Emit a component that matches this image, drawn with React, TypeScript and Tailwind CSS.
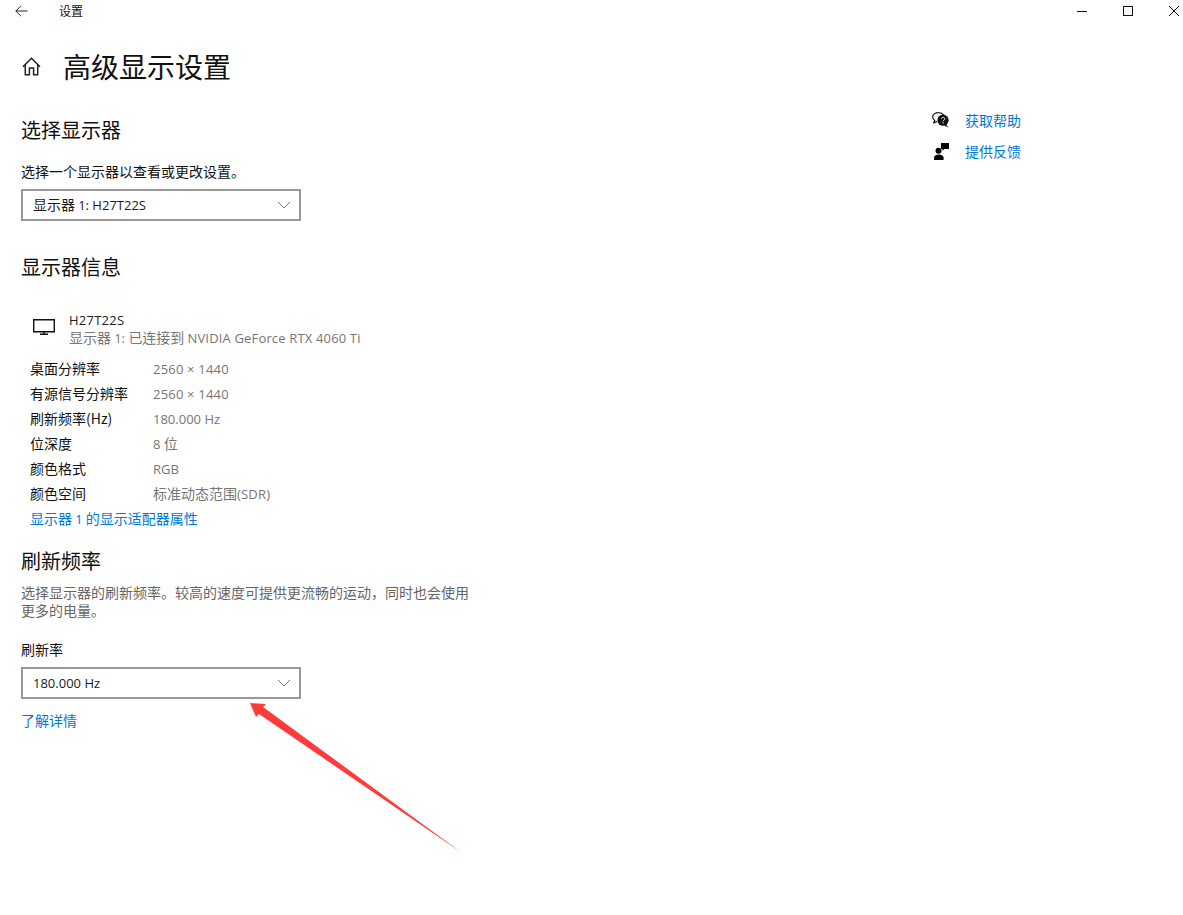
import React from "react";
import clsx from "clsx";

const font = "font-['Noto_Sans_CJK_SC','Open_Sans',sans-serif]";

// Latin runs sit a little smaller than the CJK text around them
function Lat({ children, className }: { children: React.ReactNode; className?: string }) {
    return <span className={clsx("font-['Open_Sans',sans-serif] text-[13px] leading-none", className)}>{children}</span>;
}

const infoRows: [string, React.ReactNode][] = [
    ["桌面分辨率", <Lat className="tracking-[0.2px]">2560 × 1440</Lat>],
    ["有源信号分辨率", <Lat className="tracking-[0.2px]">2560 × 1440</Lat>],
    ["刷新频率(Hz)", <Lat>180.000 Hz</Lat>],
    ["位深度", <><Lat>8 </Lat>位</>],
    ["颜色格式", <Lat>RGB</Lat>],
    ["颜色空间", <>标准动态范围<Lat className="tracking-[0.2px]">(SDR)</Lat></>],
];

function Chevron() {
    return (
        <svg width="14" height="8" viewBox="0 0 14 8" fill="none" stroke="#777" strokeWidth="1">
            <path d="M1 1l6 6 6-6" />
        </svg>
    );
}

function Select({ children }: { children: React.ReactNode }) {
    return (
        <div className="flex h-[32px] w-[280px] items-center justify-between border-2 border-[#999] pl-[10px] pr-[8px] text-[14px] leading-[20px] text-[#1a1a1a]">
            <span className="pb-[2px]">{children}</span>
            <Chevron />
        </div>
    );
}

function HelpIcon() {
    return (
        <svg width="18" height="16" viewBox="0 0 18 16">
            <path d="M6.5.7C3.2.7.7 2.6.7 5.1c0 1.4.8 2.7 2 3.5L1.8 10.8 5.2 9.6" fill="none" stroke="#111" strokeWidth="1.2" />
            <path d="M6.5.7c2.2 0 4.2.9 5.2 2.3" fill="none" stroke="#111" strokeWidth="1.2" />
            <circle cx="11" cy="8.2" r="5.6" fill="#111" />
            <path d="M13.8 12.4l2.9 3.1-4.4-1.8z" fill="#111" />
            <path d="M9.4 6.9c.1-1 .8-1.5 1.7-1.5s1.6.6 1.6 1.4c0 1.2-1.6 1.3-1.6 2.5" fill="none" stroke="#fff" strokeWidth="1" />
            <rect x="10.6" y="10.3" width="1.1" height="1.1" fill="#fff" />
        </svg>
    );
}

function FeedbackIcon() {
    return (
        <svg width="15" height="17" viewBox="0 0 15 17">
            <path d="M7 0h8v6h-4.5L8.5 7.8V6H7z" fill="#000" />
            <circle cx="4.5" cy="7.8" r="3" fill="#000" />
            <path d="M0 17v-2.2c0-2 1.9-3.3 4.8-3.3s4.8 1.3 4.8 3.3V17z" fill="#000" />
        </svg>
    );
}

export default function App() {
    return (
        <div className={`relative min-h-[915px] w-full overflow-hidden bg-white ${font}`}>
            {/* Title bar */}
            <div className="flex h-[22px] items-center justify-between">
                <div className="flex items-center">
                    <svg className="ml-[15px]" width="13" height="12" viewBox="0 0 13 12" fill="none" stroke="#222" strokeWidth="1">
                        <path d="M12.5 6H.8M6 .8L.8 6 6 11.2" />
                    </svg>
                    <span className="ml-[31px] text-[12px] leading-[16px] text-[#111]">设置</span>
                </div>
                <div className="flex items-center">
                    <svg width="10" height="10" viewBox="0 0 10 10" stroke="#111" strokeWidth="1">
                        <path d="M0 5.5h10" />
                    </svg>
                    <svg className="ml-[36px]" width="10" height="10" viewBox="0 0 10 10" fill="none" stroke="#111" strokeWidth="1">
                        <rect x=".5" y=".5" width="9" height="9" />
                    </svg>
                    <svg className="ml-[36px] mr-[4px]" width="10" height="10" viewBox="0 0 10 10" fill="none" stroke="#111" strokeWidth="1">
                        <path d="M0 0l10 10M10 0L0 10" />
                    </svg>
                </div>
            </div>

            <div className="flex">
                {/* Main column */}
                <div className="w-[932px] pl-[21px]">
                    <div className="mt-[22px] flex h-[44px] items-center">
                        <svg className="ml-[1px]" width="19" height="19" viewBox="0 0 19 19" fill="none" stroke="#222" strokeWidth="1.5">
                            <path d="M1 9.8L9.5 1.2 18 9.8M3.3 7.6V17.8H7.4V11H11.6V17.8H15.7V7.6" />
                        </svg>
                        <h1 className="ml-[22px] text-[28px] font-normal leading-[44px] text-[#111]">高级显示设置</h1>
                    </div>

                    <h2 className="mt-[28px] text-[20px] font-normal leading-[28px] text-[#111]">选择显示器</h2>
                    <p className="mt-[17px] text-[14px] leading-[20px] text-[#111]">选择一个显示器以查看或更改设置。</p>
                    <div className="mt-[8px]">
                        <Select>显示器 <Lat>1: H27T22S</Lat></Select>
                    </div>

                    <h2 className="mt-[32px] text-[20px] font-normal leading-[28px] text-[#111]">显示器信息</h2>

                    <div className="mt-[29px] flex pl-[12px]">
                        <svg className="mt-[9px]" width="22" height="16" viewBox="0 0 22 16" fill="none" stroke="#111" strokeWidth="1.4">
                            <path d="M.7.7h20.6v12H.7zM7 15.3h8M11 12.7v2.6" />
                        </svg>
                        <div className="ml-[14px]">
                            <div className="text-[14px] leading-[18px] text-[#222]"><Lat className="tracking-[0.25px]">H27T22S</Lat></div>
                            <div className="text-[14px] leading-[18px] text-[#767676]">显示器 <Lat>1: </Lat>已连接到 <Lat className="tracking-[0.16px]">NVIDIA GeForce RTX 4060 Ti</Lat></div>
                        </div>
                    </div>

                    <div className="mt-[9px] pl-[9px]">
                        {infoRows.map(([label, value]) => (
                            <div key={label} className="flex h-[25px] items-center text-[14px] leading-[20px]">
                                <span className="w-[123px] text-[#111]">{label}</span>
                                <span className="text-[#767676]">{value}</span>
                            </div>
                        ))}
                        <div className="flex h-[25px] items-center text-[14px] leading-[20px] text-[#0078d7]">
                            <span>显示器 <Lat>1</Lat> 的显示适配器属性</span>
                        </div>
                    </div>

                    <h2 className="mt-[17px] text-[20px] font-normal leading-[28px] text-[#111]">刷新频率</h2>
                    <p className="mt-[8px] w-[450px] text-[14px] leading-[18px] text-[#666]">
                        选择显示器的刷新频率。较高的速度可提供更流畅的运动，同时也会使用更多的电量。
                    </p>
                    <div className="mt-[20px] text-[14px] leading-[20px] text-[#111]">刷新率</div>
                    <div className="mt-[8px]">
                        <Select><Lat>180.000 Hz</Lat></Select>
                    </div>
                    <div className="mt-[11px] text-[14px] leading-[20px] text-[#0078d7]">了解详情</div>
                </div>

                {/* Side links */}
                <div className="pt-[87px]">
                    <div className="flex h-[22px] items-center">
                        <HelpIcon />
                        <span className="ml-[15px] text-[14px] leading-[20px] text-[#0078d7]">获取帮助</span>
                    </div>
                    <div className="mt-[9px] flex h-[22px] items-center">
                        <span className="ml-[2px] flex"><FeedbackIcon /></span>
                        <span className="ml-[16px] text-[14px] leading-[20px] text-[#0078d7]">提供反馈</span>
                    </div>
                </div>
            </div>

            {/* Red annotation arrow */}
            <svg className="absolute left-0 top-0" width="1183" height="915" viewBox="0 0 1183 915">
                <polygon points="250,703 266,704 263,707 462,853 259,714 256,717" fill="#ff3b3b" />
            </svg>
        </div>
    );
}
